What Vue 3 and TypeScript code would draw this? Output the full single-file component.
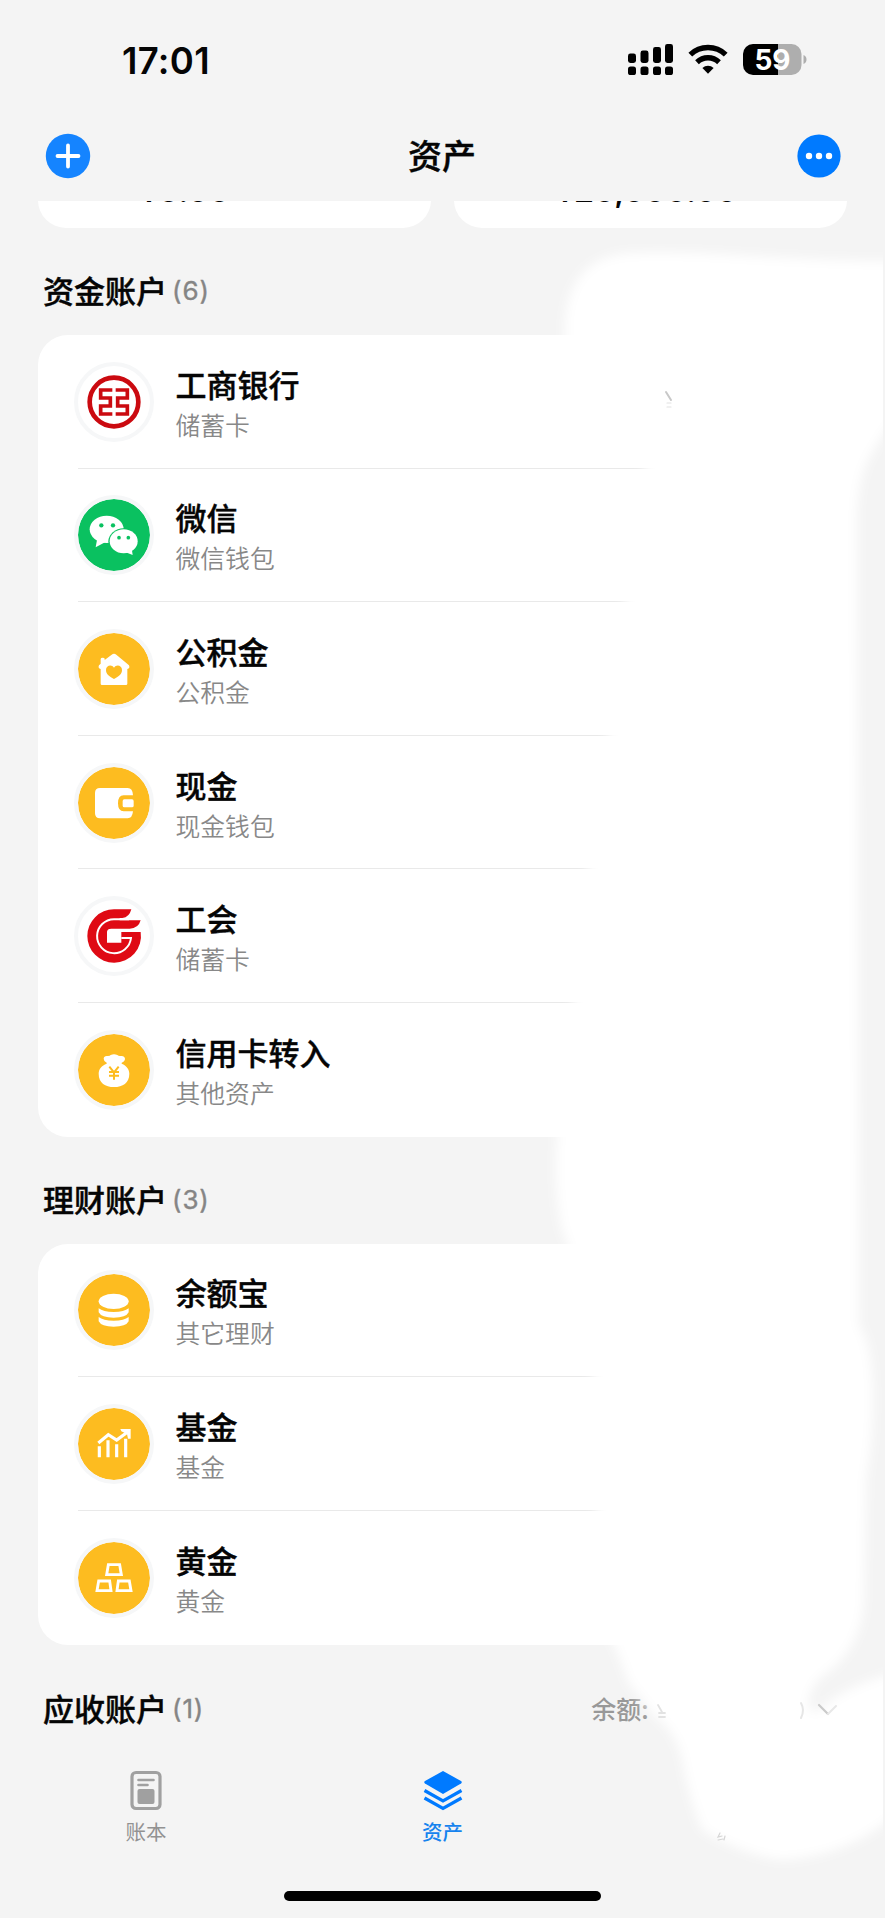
<script setup lang="ts">
type IconName = 'icbc' | 'wechat' | 'house' | 'wallet' | 'union' | 'bag' | 'coins' | 'chart' | 'gold'

interface Account {
  name: string
  kind: string
  icon: IconName
}

interface Section {
  title: string
  accounts: Account[]
}

const sections: Section[] = [
  {
    title: '资金账户',
    accounts: [
      { name: '工商银行', kind: '储蓄卡', icon: 'icbc' },
      { name: '微信', kind: '微信钱包', icon: 'wechat' },
      { name: '公积金', kind: '公积金', icon: 'house' },
      { name: '现金', kind: '现金钱包', icon: 'wallet' },
      { name: '工会', kind: '储蓄卡', icon: 'union' },
      { name: '信用卡转入', kind: '其他资产', icon: 'bag' },
    ],
  },
  {
    title: '理财账户',
    accounts: [
      { name: '余额宝', kind: '其它理财', icon: 'coins' },
      { name: '基金', kind: '基金', icon: 'chart' },
      { name: '黄金', kind: '黄金', icon: 'gold' },
    ],
  },
]

const tone = (icon: IconName): string =>
  icon === 'icbc' || icon === 'union' ? 'plain' : icon === 'wechat' ? 'green' : 'amber'
</script>

<template>
  <div class="screen">
    <header class="top">
      <div class="status">
        <span class="time">17:01</span>
        <svg class="signals" width="182" height="34" viewBox="0 0 182 34">
          <g>
            <rect x="0" y="11.5" width="8" height="9.5" rx="2.4" />
            <rect x="12.5" y="8.5" width="8" height="12.5" rx="2.4" />
            <rect x="25" y="5" width="8" height="16" rx="2.4" />
            <rect x="37" y="2" width="8" height="19" rx="2.4" />
            <rect v-for="x in [0, 12.5, 25, 37]" :key="x" :x="x" y="24.5" width="8" height="8.5" rx="2.6" />
          </g>
          <g fill="none" stroke="#000" stroke-width="5.4">
            <path d="M62.300 12.600a25.500 25.500 0 0 1 35.400 0" />
            <path d="M69 20.200a16 16 0 0 1 22 0" />
          </g>
          <path d="M80 31.800l-5.600-5.900a8.200 8.200 0 0 1 11.200 0z" />
          <path d="M150.500 2h-25.500a10 10 0 0 0-10 10v11a10 10 0 0 0 10 10h25.500z" />
          <path d="M150 2h13.500a10 10 0 0 1 10 10v11a10 10 0 0 1-10 10h-13.500z" fill="#aeaeae" />
          <path d="M175.500 13c4 1 4 8 0 9z" fill="#aeaeae" />
          <text x="144.500" y="27.500" text-anchor="middle" class="charge">59</text>
        </svg>
      </div>
      <div class="nav">
        <svg width="46" height="46" viewBox="0 0 46 46">
          <circle cx="23" cy="23" r="22.200" fill="#1584ff" />
          <path d="M12.500 23h21M23 12.500v21" stroke="#fff" stroke-width="3.800" stroke-linecap="round" />
        </svg>
        <h1>资产</h1>
        <svg width="46" height="46" viewBox="0 0 46 46">
          <circle cx="23" cy="23" r="21.600" fill="#007aff" />
          <g fill="#fff">
            <circle cx="13" cy="23" r="3.200" />
            <circle cx="23" cy="23" r="3.200" />
            <circle cx="33" cy="23" r="3.200" />
          </g>
        </svg>
      </div>
    </header>

    <div class="totals">
      <div class="total first"><span>¥0.00</span></div>
      <div class="total second"><span>¥20,000.00</span></div>
    </div>

    <section v-for="s in sections" :key="s.title" class="section">
      <h2>{{ s.title }}<small>({{ s.accounts.length }})</small></h2>
      <ul class="card">
        <li v-for="a in s.accounts" :key="a.name">
          <span class="badge" :class="tone(a.icon)">
            <svg v-if="a.icon === 'icbc'" viewBox="133 95 240 240">
              <circle cx="253" cy="215" r="73" fill="none" stroke="#cb0a10" stroke-width="14" />
              <g fill="none" stroke="#cb0a10" stroke-width="11">
                <path d="M248 179H213V203H242V227H213V251H248" />
                <path d="M258 179H293V203H264V227H293V251H258" />
              </g>
            </svg>
            <svg v-else-if="a.icon === 'wechat'" viewBox="133 495 240 240">
              <g fill="#fff">
                <ellipse cx="231" cy="598" rx="51" ry="41" />
                <path d="M203 625l-5 27 28-15z" />
              </g>
              <ellipse cx="282" cy="634" rx="46" ry="39" fill="#0ac160" />
              <ellipse cx="282" cy="634" rx="42" ry="36" fill="#fff" />
              <path d="M288 667l21 8-3-20z" fill="#fff" />
              <g fill="#0ac160">
                <circle cx="215" cy="586" r="6.500" />
                <circle cx="250" cy="586" r="6.500" />
                <circle cx="268" cy="623" r="5.500" />
                <circle cx="296" cy="623" r="5.500" />
              </g>
            </svg>
            <svg v-else-if="a.icon === 'house'" viewBox="133 87 240 240">
              <path d="M246 164q7-6 14 0l38 32q4 10-5 11v44q0 4-4 4h-72q-4 0-4-4v-44q-9-2-5-11l5-5v-14q0-4 6-4t6 4v3z" fill="#fff" />
              <path d="M253 237c-15-8-24-15-24-27 0-14 17-18 24-7 7-11 24-7 24 7 0 12-9 19-24 27z" fill="#fdbc20" />
            </svg>
            <svg v-else-if="a.icon === 'wallet'" viewBox="133 488 240 240">
              <path d="M211 563h83q15 0 16 22h-28q-17 0-17 24t17 24h28q-2 21-16 21h-83q-15 0-15-15v-61q0-15 15-15z" fill="#fff" />
              <rect x="279" y="597" width="33" height="24" rx="5" fill="#fff" />
            </svg>
            <svg v-else-if="a.icon === 'union'" viewBox="133 80 240 240">
              <path d="M305 120H253A80 80 0 0 0 253 280A80 80 0 0 0 333 188H275V220H232V188Q232 178 245 178H300Q326 178 333 153H270V146H278Q299 144 305 120Z" fill="#df0a14" />
              <path d="M298 149.500H253A51 51 0 1 0 304 206H275" fill="none" stroke="#fff" stroke-width="6" />
            </svg>
            <svg v-else-if="a.icon === 'bag'" viewBox="133 480 240 240">
              <path d="M231 578q-9-4-9-12 1-10 13-8 6 0 8-3 10-5 20 0 4 4 10 3 11-2 13 8 0 8-10 12v3c15 6 23 17 23 30 0 28-20 40-46 40s-46-12-46-40c0-13 9-25 24-30z" fill="#fff" />
              <path d="M239 590l14 17 14-17M253 607v22M238 606h30M238 617h30" fill="none" stroke="#fdbc20" stroke-width="6" />
            </svg>
            <svg v-else-if="a.icon === 'coins'" viewBox="133 334 240 240">
              <g fill="#fff">
                <ellipse cx="252" cy="428" rx="45" ry="23" />
                <path d="M207 449q13 11 45 11t45-11v12q-8 16-45 16t-45-16z" />
                <path d="M207 475q13 11 45 11t45-11v13q-8 16-45 16t-45-16z" />
              </g>
            </svg>
            <svg v-else-if="a.icon === 'chart'" viewBox="133 15 240 240">
              <g fill="none" stroke="#fff" stroke-width="9.500">
                <path d="M209 142v33M235 124v51M261 136v39M288 119v56" />
                <path d="M206 132l30-25 25 16 34-25" />
              </g>
              <path d="M272 90h31v29h-8l-3-14-17-8z" fill="#fff" />
            </svg>
            <svg v-else viewBox="133 417 240 240">
              <g fill="none" stroke="#fff" stroke-width="8.500">
                <path d="M236 497h34l5 30h-44z" />
                <path d="M207 546h33l4 29h-42z" />
                <path d="M266 546h33l5 29h-42z" />
              </g>
            </svg>
          </span>
          <div class="label">
            <strong>{{ a.name }}</strong>
            <span>{{ a.kind }}</span>
          </div>
        </li>
      </ul>
    </section>

    <div class="receivable">
      <h2>应收账户<small>(1)</small></h2>
      <span class="balance">余额:</span>
    </div>

    <footer class="tabs">
      <div class="tab">
        <svg width="40" height="42" viewBox="0 0 40 42">
          <rect x="6" y="2.500" width="28" height="36" rx="4" fill="none" stroke="#a0a0a0" stroke-width="3.200" />
          <path d="M12.500 10h15M12.500 15h9" stroke="#a0a0a0" stroke-width="2.600" stroke-linecap="round" />
          <rect x="11.500" y="19" width="17" height="15" rx="2" fill="#a0a0a0" />
        </svg>
        <span>账本</span>
      </div>
      <div class="tab active">
        <svg width="40" height="42" viewBox="0 0 40 42">
          <path d="M20 1l18 10q1.500 1 0 2.500l-18 10.500-18-10.500q-1.500-1.500 0-2.500z" fill="#007aff" />
          <path d="M1.500 20.500L20 31l18.500-10.500M1.500 28L20 38.500 38.500 28" fill="none" stroke="#007aff" stroke-width="3.200" />
        </svg>
        <span>资产</span>
      </div>
      <div class="tab"></div>
    </footer>
    <div class="home"></div>

    <!-- soft white strokes that hide the amounts -->
    <svg class="mask" width="883" height="1918" viewBox="0 0 883 1918">
      <defs>
        <filter id="soft" x="-10%" y="-5%" width="120%" height="110%">
          <feGaussianBlur stdDeviation="5.500" />
        </filter>
      </defs>
      <path
        filter="url(#soft)"
        fill="#fff"
        d="M565 345C563 302 572 257 630 253C700 249 790 262 910 261V400Q885 428 868 460Q856 485 857 530L859 1325Q873 1345 873 1400Q873 1440 866 1480L864 1600Q862 1650 820 1678Q808 1690 808 1708Q818 1716 828 1703Q850 1684 910 1668V1800Q860 1855 783 1860Q745 1856 702 1830Q690 1800 684 1770Q680 1735 655 1716L628 1682Q618 1650 606 1630L596 1511L593 1377Q580 1270 562 1230Q552 1180 558 1130L573 1003L588 868L608 735L625 601L646 467Z"
      />
      <g fill="none" stroke-linecap="round">
        <path d="M666 392l5 8" stroke="#c8c8c8" stroke-width="2" />
        <path d="M667 403h4M667 407h4" stroke="#e2e2e2" stroke-width="1.200" />
        <path d="M658 1705l4 7m-3 1h6m-6 4h6" stroke="#e2e2e2" stroke-width="1.800" />
        <path d="M801 1703q4 7 0 15" stroke="#e6e6e6" stroke-width="2" />
        <path d="M819 1705l9 9" stroke="#cacaca" stroke-width="2.200" />
        <path d="M828 1714l8-8" stroke="#e8e8e8" stroke-width="2" />
        <path d="M720 1833l-2 4 4-1m-4 4l5-1m2-3l-1 4" stroke="#d6d6d6" stroke-width="1.200" />
      </g>
    </svg>
  </div>
</template>

<style>
html,
body {
  background: #f4f4f4;
}
</style>

<style scoped>
.screen {
  position: relative;
  width: 885px;
  height: 1918px;
  overflow: hidden;
  background: #f4f4f4;
  color: #050505;
  font-family: 'Noto Sans CJK SC', sans-serif;
  display: flex;
  flex-direction: column;
}
.top {
  height: 201px;
  flex: none;
}
.status {
  height: 111px;
  padding: 0 75px 0 122px;
  display: flex;
  justify-content: space-between;
}
.time {
  margin-top: 39px;
  font: 600 36.500px/44px Inter, sans-serif;
  letter-spacing: 0.3px;
}
.signals {
  margin-top: 42px;
}
.charge {
  font: 700 28px Inter, sans-serif;
  fill: #fff;
}
.nav {
  height: 90px;
  padding: 0 43px 0 45px;
  display: flex;
  justify-content: space-between;
  align-items: center;
}
.nav h1 {
  margin: -3px 0 0 -3px;
  font-size: 34px;
  line-height: 48px;
  font-weight: 500;
  -webkit-text-stroke: 0.400px currentColor;
}
.totals {
  height: 27px;
  flex: none;
  overflow: hidden;
  padding: 0 38px;
  display: flex;
  gap: 23px;
}
.total {
  width: 393px;
  height: 100px;
  margin-top: -73px;
  border-radius: 28px;
  background: #fff;
  display: flex;
  align-items: flex-end;
  font: 600 32px/40px Inter, sans-serif;
}
.total span {
  margin-bottom: 17px;
}
.first {
  padding-left: 102px;
  box-sizing: border-box;
}
.second {
  padding-left: 102px;
  box-sizing: border-box;
}
h2 {
  margin: 0;
  padding-left: 43px;
  height: 107px;
  box-sizing: border-box;
  padding-top: 39px;
  font-size: 31px;
  font-weight: 500;
  line-height: 46px;
  display: flex;
  -webkit-text-stroke: 0.400px currentColor;
}
small {
  margin-left: 5px;
  font: 400 26px/48px Inter, sans-serif;
  letter-spacing: 0.900px;
  color: #858585;
}
.card {
  list-style: none;
  margin: 0 38px;
  padding: 0;
  height: 801.500px;
  border-radius: 30px;
  background: #fff;
  display: flex;
  flex-direction: column;
}
.section:nth-of-type(2) .card {
  height: 401px;
}
.card li {
  flex: 1;
  margin-left: 40px;
  display: flex;
  align-items: center;
  border-bottom: 1.500px solid #e9e9e9;
}
.card li:last-child {
  border-bottom-color: transparent;
}
.badge {
  width: 72px;
  height: 72px;
  border: 4px solid #f6f7f8;
  border-radius: 50%;
  margin: 1px 0 0 -4px;
  display: flex;
  align-items: center;
  justify-content: center;
}
.badge svg {
  width: 80px;
  height: 80px;
  flex: none;
}
.plain {
  background: #fff;
}
.green {
  background: #0ac160;
  background-clip: padding-box;
}
.amber {
  background: #fdbc20;
  background-clip: padding-box;
}
.label {
  margin: 0 0 0 21.500px;
  display: flex;
  flex-direction: column;
}
.label strong {
  font-size: 31px;
  line-height: 46px;
  font-weight: 500;
  -webkit-text-stroke: 0.400px currentColor;
}
.label span {
  font-size: 24.800px;
  line-height: 35px;
  font-weight: 350;
  color: #888;
}
.receivable {
  height: 111px;
  display: flex;
}
.receivable h2 {
  padding-top: 40px;
}
.balance {
  margin: 43px 0 0 387px;
  font-size: 25px;
  line-height: 40px;
  font-weight: 500;
  color: #989898;
}
.tabs {
  display: flex;
  height: 135px;
  padding-top: 14px;
  box-sizing: border-box;
}
.tab {
  flex: none;
  width: 295px;
  display: flex;
  flex-direction: column;
  align-items: center;
  color: #929292;
  font-size: 20.500px;
  line-height: 30px;
}
.tab:first-child {
  padding-right: 3px;
  box-sizing: border-box;
}
.tab svg {
  margin-bottom: 4px;
}
.active {
  color: #1683ee;
  font-weight: 500;
}
.home {
  width: 317px;
  height: 10.500px;
  border-radius: 6px;
  background: #000;
  margin: 0 auto;
}
.mask {
  position: absolute;
  left: 0;
  top: 0;
}
</style>
